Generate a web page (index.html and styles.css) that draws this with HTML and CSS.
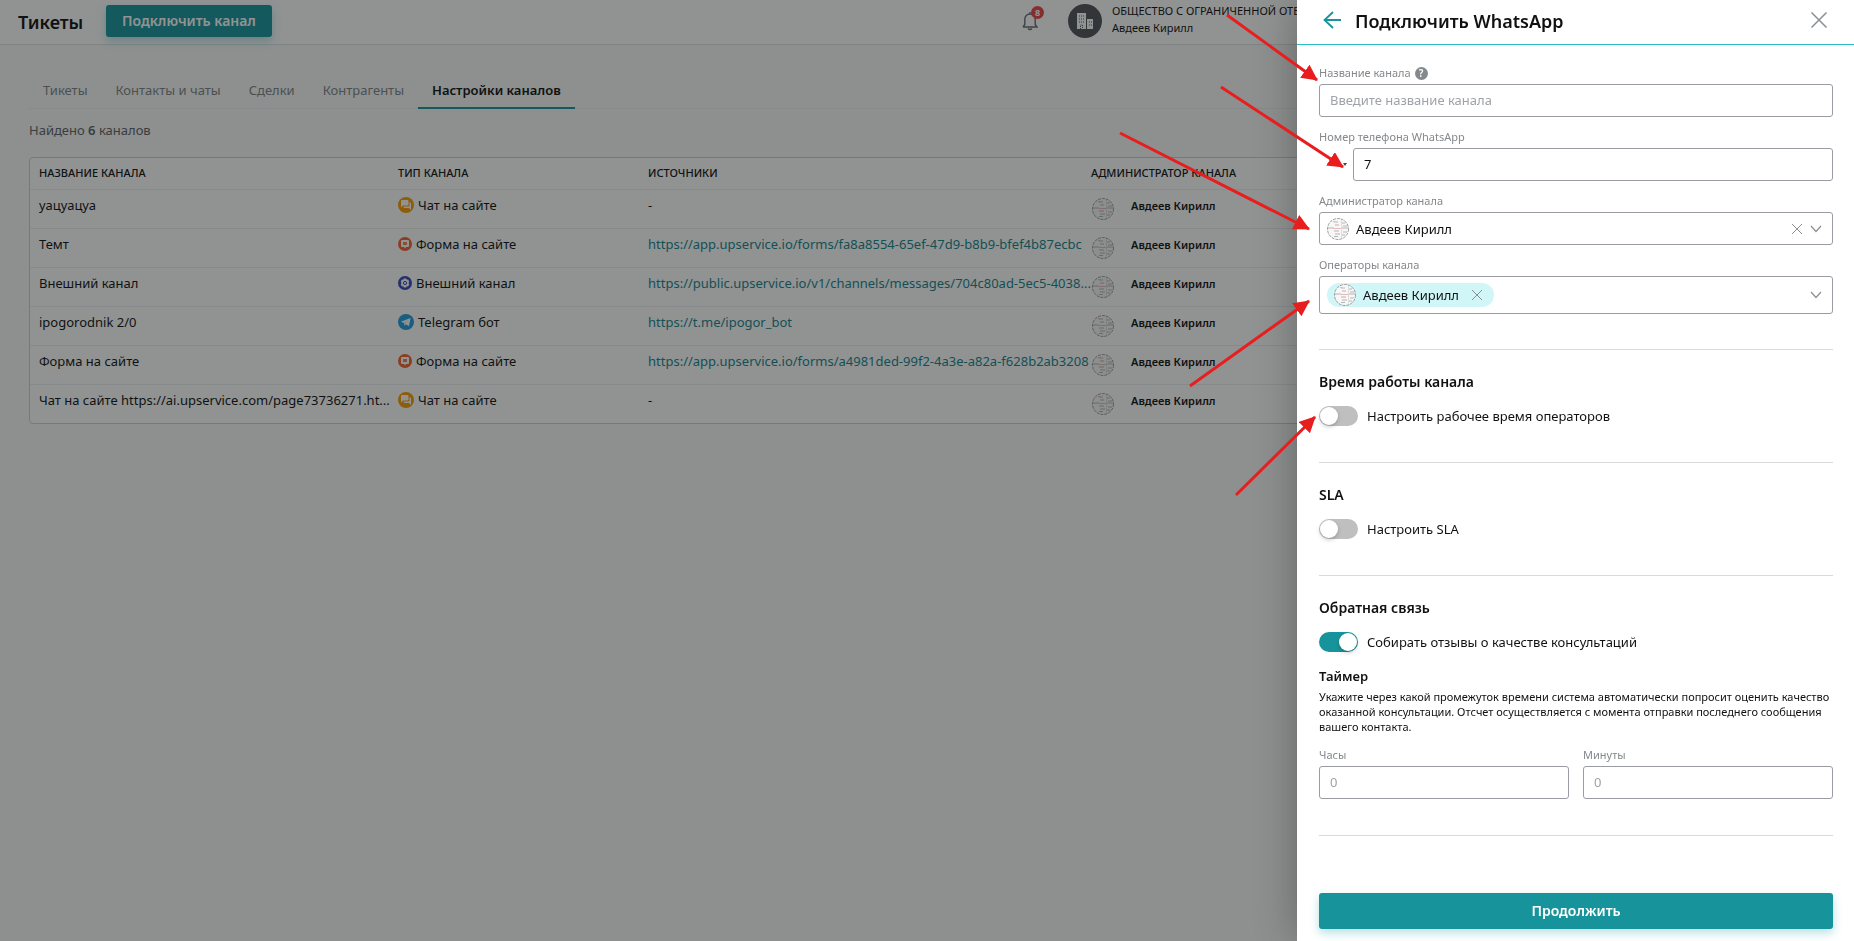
FILE: index.html
```html
<!DOCTYPE html>
<html lang="ru">
<head>
<meta charset="utf-8">
<title>Подключить WhatsApp</title>
<link rel="stylesheet" href="styles.css">
</head>
<body>
<svg class="sprite" aria-hidden="true">
  <symbol id="chat" viewBox="0 0 16 16"><circle cx="8" cy="8" r="8" fill="#f79c04"/><path d="M3 4q0-1 1-1h5.500q1 0 1 1v3.500q0 1-1 1H5L3 10.500z" fill="#fff"/><path d="M11.500 5.500h.7q.8 0 .8.800V13l-2-2H6.500q-.8 0-.8-.8v-.7h5q.8 0 .8-.8z" fill="#fff"/></symbol>
  <symbol id="form" viewBox="0 0 14 14"><circle cx="7" cy="7" r="7" fill="#f4602f"/><path d="M4 3h6q1 0 1 1v5q0 1-1 1H8l-1 1.500L6 10H4q-1 0-1-1V4q0-1 1-1z" fill="#fff"/><path d="M5 5h4v3H5z" fill="#f4805c"/></symbol>
  <symbol id="ext" viewBox="0 0 14 14"><circle cx="7" cy="7" r="7" fill="#3846b8"/><path d="M5.800 2.500h2.400l.5 1.300 1.400-.2 1.200 2.100-.9 1.300.9 1.300-1.200 2.100-1.400-.2-.5 1.300H5.800l-.5-1.300-1.400.2-1.200-2.100.9-1.300-.9-1.300 1.200-2.100 1.400.2z" fill="#fff"/><circle cx="7" cy="7" r="1.600" fill="none" stroke="#3846b8"/></symbol>
  <symbol id="tg" viewBox="0 0 16 16"><circle cx="8" cy="8" r="8" fill="#229cdb"/><path d="M2.800 7.800 12.600 4l-1.700 8.200-2.900-2-1.500 1.500-.5-2.600z" fill="#fff"/><path d="M6 9.100 11 5.500 7.200 9.600l-.7 2.100z" fill="#bfe0f2"/></symbol>
  <symbol id="ava" viewBox="0 0 22 22"><circle cx="11" cy="11" r="10.500" fill="#f7f7f7" stroke="#9a9a9a" stroke-dasharray="3 1"/><path d="M1 10h6M15 10h6M7 4h4M8 7h4M7 13h5M8 16h5M7 18.500h4M15 5h3M16 8h4M16 14h4M15 17h3" stroke="#b5b5b5" fill="none"/><path d="M7 10.500h7M6 3.500h2" stroke="#f0b5b5" fill="none"/><path d="M14.500 2v18" stroke="#dedede"/></symbol>
  <symbol id="cross" viewBox="0 0 12 12"><path d="M1 1 11 11M11 1 1 11" fill="none" stroke="currentColor"/></symbol>
  <symbol id="down" viewBox="0 0 12 8"><path d="M1 1 6 6.500 11 1" fill="none" stroke="currentColor" stroke-width="1.200"/></symbol>
</svg>

<div class="page">
  <header class="topbar">
    <h1 class="topbar-title">Тикеты</h1>
    <button class="primary connect" type="button">Подключить канал</button>
    <div class="account">
      <button class="bell" type="button" aria-label="Уведомления">
        <svg width="16" height="20" viewBox="0 0 16 20" fill="none" stroke="#666b73" stroke-width="1.400"><path d="M8 1v2M1 16h14l-1.800-2.500V8.500C13.200 5 11 3 8 3S2.800 5 2.800 8.500v5L1 16M6 17.500q2 2 4 0"/></svg>
        <span class="count">8</span>
      </button>
      <svg class="company" width="34" height="34" viewBox="0 0 34 34"><circle cx="17" cy="17" r="17" fill="#515357"/><path d="M9 9h9v16H9zM19 15h6v10h-6z" fill="#fff"/><path d="M11 12h5M11 15h5M11 18h5M21 18h3M21 21h3M12.500 25v-4h2v4" stroke="#515357" stroke-dasharray="1 1" fill="none"/></svg>
      <div class="who"><span>ОБЩЕСТВО С ОГРАНИЧЕННОЙ ОТВ</span><span>Авдеев Кирилл</span></div>
    </div>
  </header>
  <main class="content">
    <nav class="tabs">
      <a class="tab" href="#">Тикеты</a><a class="tab" href="#">Контакты и чаты</a><a class="tab" href="#">Сделки</a><a class="tab" href="#">Контрагенты</a><a class="tab active" href="#">Настройки каналов</a>
    </nav>
    <p class="found">Найдено <b>6</b> каналов</p>
    <div class="card">
      <table class="channels">
        <colgroup><col class="c-name"><col class="c-type"><col class="c-src"><col></colgroup>
        <thead><tr><th>НАЗВАНИЕ КАНАЛА</th><th>ТИП КАНАЛА</th><th>ИСТОЧНИКИ</th><th>АДМИНИСТРАТОР КАНАЛА</th></tr></thead>
        <tbody>
          <tr><td>уацуацуа</td><td><span class="type"><svg width="16" height="16"><use href="#chat"/></svg>Чат на сайте</span></td><td>-</td><td><span class="admin"><svg width="22" height="22"><use href="#ava"/></svg>Авдеев Кирилл</span></td></tr>
          <tr><td>Темт</td><td><span class="type"><svg width="14" height="14"><use href="#form"/></svg>Форма на сайте</span></td><td><a href="#">https://app.upservice.io/forms/fa8a8554-65ef-47d9-b8b9-bfef4b87ecbc</a></td><td><span class="admin"><svg width="22" height="22"><use href="#ava"/></svg>Авдеев Кирилл</span></td></tr>
          <tr><td>Внешний канал</td><td><span class="type"><svg width="14" height="14"><use href="#ext"/></svg>Внешний канал</span></td><td><a href="#">https://public.upservice.io/v1/channels/messages/704c80ad-5ec5-4038...</a></td><td><span class="admin"><svg width="22" height="22"><use href="#ava"/></svg>Авдеев Кирилл</span></td></tr>
          <tr><td>ipogorodnik 2/0</td><td><span class="type"><svg width="16" height="16"><use href="#tg"/></svg>Telegram бот</span></td><td><a href="#">https://t.me/ipogor_bot</a></td><td><span class="admin"><svg width="22" height="22"><use href="#ava"/></svg>Авдеев Кирилл</span></td></tr>
          <tr><td>Форма на сайте</td><td><span class="type"><svg width="14" height="14"><use href="#form"/></svg>Форма на сайте</span></td><td><a href="#">https://app.upservice.io/forms/a4981ded-99f2-4a3e-a82a-f628b2ab3208</a></td><td><span class="admin"><svg width="22" height="22"><use href="#ava"/></svg>Авдеев Кирилл</span></td></tr>
          <tr><td>Чат на сайте https://ai.upservice.com/page73736271.ht...</td><td><span class="type"><svg width="16" height="16"><use href="#chat"/></svg>Чат на сайте</span></td><td>-</td><td><span class="admin"><svg width="22" height="22"><use href="#ava"/></svg>Авдеев Кирилл</span></td></tr>
        </tbody>
      </table>
    </div>
  </main>
</div>
<div class="overlay"></div>

<aside class="drawer">
  <header class="drawer-head">
    <button class="icon-btn back" type="button" aria-label="Назад"><svg width="18" height="18" viewBox="0 0 18 18" fill="none" stroke="currentColor" stroke-width="1.800"><path d="M18 9H1.500M10 1 1.500 9l8.500 8"/></svg></button>
    <h2 class="drawer-title">Подключить WhatsApp</h2>
    <button class="icon-btn close" type="button" aria-label="Закрыть"><svg width="18" height="18" viewBox="0 0 12 12"><use href="#cross"/></svg></button>
  </header>
  <form class="drawer-body">
    <section class="section fields">
      <div class="field">
        <label class="label" for="name">Название канала <span class="help">?</span></label>
        <input class="input" id="name" type="text" placeholder="Введите название канала">
      </div>
      <div class="field">
        <label class="label" for="phone">Номер телефона WhatsApp</label>
        <div class="phone">
          <button class="country" type="button" aria-label="Страна"></button>
          <input class="input" id="phone" type="tel" value="7">
        </div>
      </div>
      <div class="field">
        <span class="label" id="adm">Администратор канала</span>
        <div class="combo" role="group" aria-labelledby="adm">
          <svg width="22" height="22"><use href="#ava"/></svg><span class="value">Авдеев Кирилл</span>
          <button class="icon-btn" type="button" aria-label="Очистить"><svg width="12" height="12"><use href="#cross"/></svg></button>
          <button class="icon-btn" type="button" aria-label="Открыть"><svg width="12" height="8"><use href="#down"/></svg></button>
        </div>
      </div>
      <div class="field">
        <span class="label" id="ops">Операторы канала</span>
        <div class="combo multi" role="group" aria-labelledby="ops">
          <span class="chip"><svg width="22" height="22"><use href="#ava"/></svg><span class="chip-text">Авдеев Кирилл</span><button class="icon-btn" type="button" aria-label="Удалить"><svg width="12" height="12"><use href="#cross"/></svg></button></span>
          <button class="icon-btn" type="button" aria-label="Открыть"><svg width="12" height="8"><use href="#down"/></svg></button>
        </div>
      </div>
    </section>
    <section class="section">
      <h3 class="heading">Время работы канала</h3>
      <label class="switch"><input type="checkbox">Настроить рабочее время операторов</label>
    </section>
    <section class="section">
      <h3 class="heading">SLA</h3>
      <label class="switch"><input type="checkbox">Настроить SLA</label>
    </section>
    <section class="section">
      <h3 class="heading">Обратная связь</h3>
      <label class="switch"><input type="checkbox" checked>Собирать отзывы о качестве консультаций</label>
      <h4 class="subheading">Таймер</h4>
      <p class="note">Укажите через какой промежуток времени система автоматически попросит оценить качество оказанной консультации. Отсчет осуществляется с момента отправки последнего сообщения вашего контакта.</p>
      <div class="pair">
        <div><label class="label" for="hours">Часы</label><input class="input" id="hours" type="text" placeholder="0"></div>
        <div><label class="label" for="mins">Минуты</label><input class="input" id="mins" type="text" placeholder="0"></div>
      </div>
    </section>
    <button class="primary submit" type="button">Продолжить</button>
  </form>
</aside>

<svg class="arrows" width="1854" height="941" aria-hidden="true">
  <defs><marker id="head" markerUnits="userSpaceOnUse" markerWidth="16" markerHeight="16" refX="15" refY="8" orient="auto"><path d="M0 0 16 8 0 16z" fill="#e81e1e"/></marker></defs>
  <g stroke="#e81e1e" stroke-width="3">
    <path d="M1227 15 1317 80" marker-end="url(#head)"/>
    <path d="M1221 87 1343 167" marker-end="url(#head)"/>
    <path d="M1120 133 1309 229" marker-end="url(#head)"/>
    <path d="M1190 386 1309 301" marker-end="url(#head)"/>
    <path d="M1236 495 1315 417" marker-end="url(#head)"/>
  </g>
</svg>
</body>
</html>
```
FILE: styles.css
```css
* { box-sizing: border-box; }
body { margin: 0; height: 100vh; overflow: hidden; font: 13px/18px "Noto Sans", "Open Sans", sans-serif; color: #111; background: #f8f9f8; }
h1, h2, h3, h4, p { margin: 0; }
button { font: inherit; border: 0; padding: 0; background: none; color: inherit; }
svg { flex: none; display: block; }
.sprite { position: absolute; width: 0; height: 0; }
.primary { background: #17949b; color: #fff; font-weight: 600; font-size: 14px; border-radius: 3px; box-shadow: 0 4px 10px rgba(23, 148, 155, .3); }

.topbar { display: flex; align-items: center; height: 45px; padding: 0 18px; background: #fff; border-bottom: 1px solid #dfe1e1; }
.topbar-title { font-size: 18px; font-weight: 600; width: 88px; }
.connect { height: 32px; padding: 0 16px; margin-bottom: 2px; }
.account { display: flex; align-items: center; margin-left: auto; width: 814px; gap: 30px; margin-bottom: 2px; white-space: nowrap; }
.bell { position: relative; }
.count { position: absolute; left: 9px; top: -5px; width: 13px; height: 13px; border-radius: 50%; background: #ee4444; color: #fff; font-size: 9px; font-weight: 700; line-height: 13px; }
.who { display: flex; flex-direction: column; width: 185px; overflow: hidden; font-size: 11px; line-height: 17px; margin: 0 0 5px -20px; }

.content { padding: 27px 29px; }
.tabs { display: flex; border-bottom: 1px solid #ebeded; }
.tab { padding: 9px 14px 7px; border-bottom: 2px solid transparent; color: #808487; text-decoration: none; }
.tab.active { color: #111; font-weight: 600; border-color: #17949b; margin-bottom: -1px; }
.found { margin: 12px 0 18px; color: #5f6366; }
.found b { font-weight: 600; }
.card { border: 1px solid #ccd0d1; border-radius: 4px; background: #fff; }
.channels { width: 100%; table-layout: fixed; border-collapse: collapse; }
.c-name { width: 359px; }
.c-type { width: 250px; }
.c-src { width: 443px; }
.channels th, .channels td { padding: 0 9px; text-align: left; white-space: nowrap; }
.channels th { height: 31px; padding-bottom: 1px; font-size: 11px; font-weight: 500; }
.channels td { height: 39px; padding-bottom: 7px; border-top: 1px solid #eceeee; }
.channels a { color: #17848b; text-decoration: none; }
.type { display: flex; align-items: center; gap: 4px; }
.admin { display: flex; gap: 17px; height: 22px; margin: 4px 0 -4px; padding-left: 1px; font-size: 11px; font-weight: 600; line-height: 15px; }

.overlay { position: fixed; inset: 0; background: rgba(16, 20, 19, .46); }

.drawer { position: fixed; top: 0; right: 0; bottom: 0; width: 557px; display: flex; flex-direction: column; background: #fff; box-shadow: 0 0 40px rgba(0, 0, 0, .3); }
.drawer-head { display: flex; align-items: center; height: 45px; padding: 0 26px 2px; border-bottom: 1px solid #26c0c6; }
.drawer-title { flex: 1; margin-left: 14px; font-size: 18px; font-weight: 600; }
.icon-btn { color: #8b8e93; }
.back { color: #17949b; margin-bottom: 3px; }
.close { margin-bottom: 3px; }
.drawer-body { flex: 1; display: flex; flex-direction: column; padding: 19px 21px 12px 22px; }
.section { border-bottom: 1px solid #d9d9d9; margin-bottom: 22px; padding-bottom: 36px; }
.fields { display: flex; flex-direction: column; gap: 11px; padding-bottom: 35px; }
.label { display: flex; align-items: center; gap: 4px; height: 20px; padding-bottom: 2px; font-size: 11px; color: #85888c; }
.help { width: 13px; height: 13px; border-radius: 50%; background: #85888c; color: #fff; font-size: 10px; font-weight: 600; line-height: 13px; text-align: center; }
.input { display: block; width: 100%; height: 33px; padding: 0 10px 2px; border: 1px solid #9b9ca3; border-radius: 3px; background: #fff; font: inherit; color: #111; }
.input::placeholder { color: #9fa2a8; opacity: 1; }
.phone { display: flex; }
.country { width: 34px; flex: none; display: flex; align-items: center; justify-content: flex-end; padding-right: 6px; }
.country::after { content: ""; border: 2px solid transparent; border-top: 3px solid #444; border-bottom: 0; }
.combo { display: flex; align-items: center; gap: 7px; height: 33px; padding: 0 10px 0 7px; border: 1px solid #9b9ca3; border-radius: 3px; }
.multi { height: 38px; justify-content: space-between; }
.value { flex: 1; }
.chip { display: flex; align-items: center; gap: 7px; height: 24px; padding: 0 11px 0 7px; border-radius: 12px; background: #d0f6f7; }
.chip-text { margin-right: 5px; }
.heading { font-size: 14px; font-weight: 600; line-height: 20px; margin-bottom: 14px; }
.switch { display: flex; align-items: center; gap: 9px; height: 20px; }
.switch input { appearance: none; width: 39px; height: 20px; margin: 0; padding: 1px; border-radius: 10px; background: #bfbfbf; display: flex; }
.switch input::before { content: ""; width: 18px; height: 18px; border-radius: 50%; background: #fff; box-shadow: 0 2px 4px rgba(0, 0, 0, .2); }
.switch input:checked { background: #17949b; justify-content: flex-end; }
.subheading { font-size: 13px; font-weight: 600; margin: 15px 0 4px; }
.note { font-size: 11px; line-height: 15px; margin-bottom: 12px; }
.pair { display: grid; grid-template-columns: 1fr 1fr; gap: 14px; }
.submit { height: 36px; margin-top: auto; }

.arrows { position: fixed; left: 0; top: 0; pointer-events: none; }
```
